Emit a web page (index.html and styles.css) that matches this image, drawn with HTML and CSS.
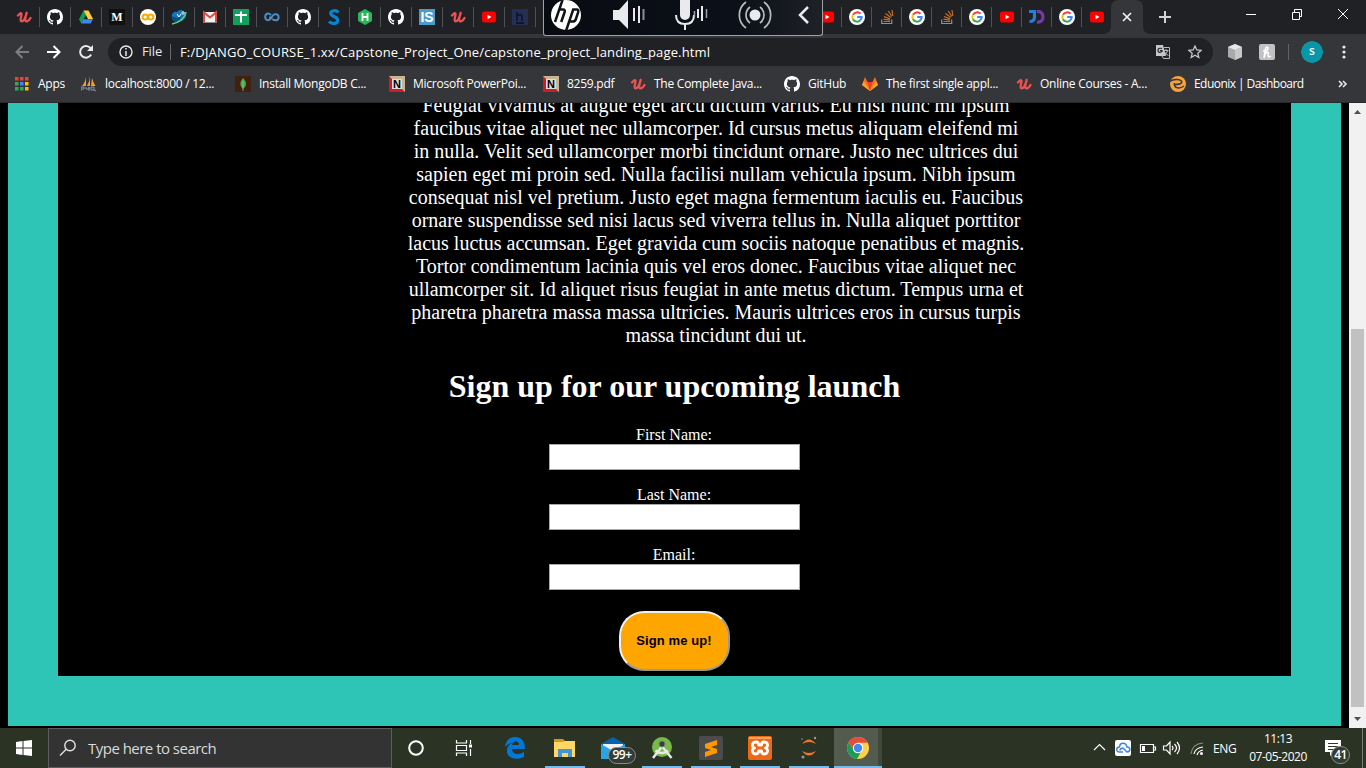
FILE: index.html
```html
<!DOCTYPE html>
<html lang="en">
<head>
<meta charset="utf-8">
<title>Capstone landing page</title>
<link rel="stylesheet" href="styles.css">
</head>
<body>
<svg class="defs" width="0" height="0">
  <symbol id="udemy" viewBox="0 0 16 16"><path d="M2 6.500Q5 3 5.500 4.800C5.800 6.500 3.300 12.200 5.600 12.400C8 12.500 10 7.500 10.600 4M10.600 4C9 9 8.600 12.500 10.500 12.400C12.300 12.300 13.300 11 14.500 9" fill="none" stroke="#ec5252" stroke-width="2.300" stroke-linecap="round"/></symbol>
  <symbol id="github" viewBox="0 0 16 16"><path fill="#fff" d="M8 0C3.580 0 0 3.580 0 8c0 3.540 2.290 6.530 5.470 7.590.4.070.55-.17.55-.38 0-.19-.01-.82-.01-1.490-2.010.37-2.530-.49-2.690-.94-.09-.23-.48-.94-.82-1.130-.28-.15-.68-.52-.01-.53.63-.01 1.080.58 1.230.82.72 1.210 1.870.87 2.330.66.070-.52.28-.87.51-1.070-1.780-.2-3.640-.89-3.640-3.950 0-.87.31-1.590.82-2.150-.08-.2-.36-1.020.08-2.120 0 0 .67-.21 2.200.82.64-.18 1.320-.27 2-.27s1.360.09 2 .27c1.530-1.040 2.200-.82 2.200-.82.44 1.100.16 1.920.08 2.120.51.56.82 1.270.82 2.150 0 3.070-1.870 3.750-3.650 3.950.29.25.54.73.54 1.480 0 1.070-.01 1.930-.01 2.200 0 .21.15.46.55.38A8.010 8.010 0 0 0 16 8c0-4.420-3.580-8-8-8z"/></symbol>
  <symbol id="drive" viewBox="0 0 16 16"><path fill="#0f9d58" d="M5.500 1.500L8 6 3.300 14.500 1 10.200z"/><path fill="#ffcd40" d="M5.500 1.500h5L15 10h-5z"/><path fill="#4285f4" d="M5.400 10.200H15l-2.500 4.300H3.200z"/></symbol>
  <symbol id="colab" viewBox="0 0 16 16"><circle cx="8" cy="8" r="8" fill="#fff"/><g fill="none" stroke="#f9ab00" stroke-width="2"><circle cx="5.200" cy="8" r="2.600"/><circle cx="10.800" cy="8" r="2.600"/></g></symbol>
  <symbol id="globe" viewBox="0 0 16 16"><path fill="#1575b5" d="M1 9C0 4 3 2 6 3c2-3 6-2 7-.5 3 1 3 5 0 8-3 3-11 4-12-1.500z"/><path fill="#08508b" d="M1 7l5 2 4-2-2 6-6-1z"/><path fill="none" stroke="#63cf68" stroke-width="1.500" d="M1 15C8 14 14 9 15 3"/><path fill="none" stroke="#fff" d="M6 5l2 3 2-3"/><circle cx="12" cy="4" r="1.200" fill="none" stroke="#fff" stroke-width=".8"/></symbol>
  <symbol id="gmail" viewBox="0 0 16 16"><path fill="#f1f1f1" d="M1 3h14v10.500H1z"/><path fill="none" stroke="#dd4b3e" stroke-width="2" d="M2 13.500V3.500l6 5 6-5v10"/></symbol>
  <symbol id="sheet" viewBox="0 0 16 16"><path fill="#12a05c" d="M0 0h16v16H0z"/><path stroke="#fff" stroke-width="2" d="M2 6h12M8 2.500v11"/></symbol>
  <symbol id="loop" viewBox="0 0 16 16"><path fill="none" stroke="#4a8ec8" stroke-width="2" d="M7 6C4 3 1 5 1.200 8c.3 4 4 4 6.200 1l1-2c2-3 6-2 6.200 1 .2 4-4 4-6.200 2M5 8.500h3"/></symbol>
  <symbol id="skill" viewBox="0 0 16 16"><path fill="none" stroke="#0785d2" stroke-width="3.200" d="M12.500 3.500C10 .8 4.800 1.200 4.700 4.300c-.1 3.500 7 3 7 7 0 4-6 4-8.700 1.200"/></symbol>
  <symbol id="hacker" viewBox="0 0 16 16"><path fill="#2ab75a" stroke="#2ab75a" stroke-linejoin="round" d="M8 .5l6.500 3.700v7.600L8 15.500l-6.500-3.700V4.200z"/><path stroke="#fff" stroke-width="1.800" d="M5.500 4v8M10.500 4v8M5.500 8h5"/></symbol>
  <symbol id="youtube" viewBox="0 0 16 16"><rect x="1" y="2.500" width="14" height="11" rx="2.500" fill="#f00"/><path fill="#fff" d="M6.500 5.700L10.500 8l-4 2.300z"/></symbol>
  <symbol id="hyp" viewBox="0 0 16 16"><path fill="#252f56" d="M0 0h16v16H0z"/><path fill="none" stroke="#11172b" stroke-width="1.800" d="M5 3v9M5 7q5-3 5 1v4M4 14h8"/></symbol>
  <symbol id="google" viewBox="0 0 16 16"><circle cx="8" cy="8" r="8" fill="#fff"/><g fill="none" stroke-width="2"><path stroke="#ea4335" d="M4 5.800A4.700 4.700 0 0 1 11.500 4.800"/><path stroke="#fbbc05" d="M4 5.700a4.700 4.700 0 0 0 0 4.700"/><path stroke="#34a853" d="M4 10.200a4.700 4.700 0 0 0 7.200 1.300"/><path stroke="#4285f4" d="M11 11.600C12.500 10.200 12.800 9 12.700 8H8.200"/></g></symbol>
  <symbol id="stack" viewBox="0 0 16 16"><path fill="none" stroke="#8c9296" stroke-width="1.200" d="M2.700 10.500v4h10v-4"/><path stroke="#c96d20" stroke-width="1.200" d="M4.500 12.500h6.500M4.500 10.200l6.500.9M5 7.500l6 2.400M6.500 4.600l5.300 4M9.300 2l3.500 5.500M13 1l.8 6"/></symbol>
  <symbol id="jd" viewBox="0 0 16 16"><path fill="none" stroke="#297bd5" stroke-width="3.200" d="M0 2.500h5.500V8q0 4.500-5 4.500"/><path fill="none" stroke="#793aa8" stroke-width="3.200" d="M8 2.500c8-1 8 12 0 10.500"/></symbol>
  <symbol id="mysql" viewBox="0 0 16 16"><path fill="#f89c24" d="M5 1v9H1q3-3 4-9zM9 0v10H6q3-5 3-10zM11 2q1 4 3.500 8H10z"/><path fill="none" stroke="#8d91a9" stroke-width="1" d="M0 15v-4h3v2H0m5-2v2h3v-2m0 0v4m2-4v3h3v-3h-3m3 3l2 1"/></symbol>
  <symbol id="mongo" viewBox="0 0 16 16"><path fill="#41210e" d="M0 0h16v16H0z"/><path fill="#47a84d" d="M8 2c4 4 4 8 0 11C4 9 5 6 8 2z"/><path stroke="#b4d6af" stroke-width=".6" d="M8 5v10"/></symbol>
  <symbol id="gitlab" viewBox="0 0 16 16"><path fill="#fc6d26" d="M0 9l3-8 2.500 5h5L13 1l3 8-8 6z"/><path fill="#e24329" d="M5.500 6h5L8 15z"/><path fill="#fca326" d="M0 9l2-4 6 10zM16 9l-2-4-6 10z"/></symbol>
  <symbol id="eduonix" viewBox="0 0 16 16"><circle cx="8" cy="8" r="8" fill="#f5a33d"/><path fill="none" stroke="#35363a" stroke-width="1.500" d="M0 5.500C3 3.500 9 2.500 11.500 5c1 2.500-2 3.500-7.500 3.500M4.300 7C4 13 10 13 14 10"/></symbol>
</svg>

<header class="browser">
  <div class="tabstrip">
    <div class="tabs">
      <div class="tab"><svg><use href="#udemy"/></svg></div>
      <div class="tab"><svg><use href="#github"/></svg></div>
      <div class="tab"><svg><use href="#drive"/></svg></div>
      <div class="tab"><svg viewBox="0 0 16 16"><path fill="#12100e" d="M0 0h16v16H0z"/><text x="8" y="12.200" text-anchor="middle" class="serif" font-size="12" fill="#fff">M</text></svg></div>
      <div class="tab"><svg><use href="#colab"/></svg></div>
      <div class="tab"><svg><use href="#globe"/></svg></div>
      <div class="tab"><svg><use href="#gmail"/></svg></div>
      <div class="tab"><svg><use href="#sheet"/></svg></div>
      <div class="tab"><svg><use href="#loop"/></svg></div>
      <div class="tab"><svg><use href="#github"/></svg></div>
      <div class="tab"><svg><use href="#skill"/></svg></div>
      <div class="tab"><svg><use href="#hacker"/></svg></div>
      <div class="tab"><svg><use href="#github"/></svg></div>
      <div class="tab"><svg viewBox="0 0 16 16"><path fill="#4d9bca" d="M0 0h16v16H0z"/><text x="8" y="13" text-anchor="middle" class="sans" font-size="14" fill="#fff">IS</text></svg></div>
      <div class="tab"><svg><use href="#udemy"/></svg></div>
      <div class="tab"><svg><use href="#youtube"/></svg></div>
      <div class="tab"><svg><use href="#hyp"/></svg></div>
    </div>
    <div class="tabs tabs-narrow">
      <div class="tab"><svg><use href="#youtube"/></svg></div>
      <div class="tab"><svg><use href="#google"/></svg></div>
      <div class="tab"><svg><use href="#stack"/></svg></div>
      <div class="tab"><svg><use href="#google"/></svg></div>
      <div class="tab"><svg><use href="#stack"/></svg></div>
      <div class="tab"><svg><use href="#google"/></svg></div>
      <div class="tab"><svg><use href="#youtube"/></svg></div>
      <div class="tab"><svg><use href="#jd"/></svg></div>
      <div class="tab"><svg><use href="#google"/></svg></div>
      <div class="tab tab-last"><svg><use href="#youtube"/></svg></div>
    </div>
    <svg class="active-tab" viewBox="0 0 48 34"><path fill="#35363a" d="M0 34q8 0 8-8V8q0-8 8-8h16q8 0 8 8v18q0 8 8 8z"/><path stroke="#f1f3f4" stroke-width="1.700" d="M20 13l8 8m0-8l-8 8"/></svg>
    <svg class="new-tab" viewBox="0 0 14 14"><path stroke="#d0d2d4" stroke-width="2" d="M1 7h12M7 1v12"/></svg>
    <svg class="window-controls" viewBox="0 0 104 12"><path d="M0 6.500h10M46.500 4.500h7v7h-7zM48.500 4.500v-3h7v7h-2M92 1l10 10m0-10L92 11" fill="none" stroke="#fff"/></svg>
  </div>

  <div class="hp-panel">
    <svg viewBox="0 0 279 36">
      <circle cx="22" cy="15" r="15" fill="#fff"/><path fill="none" stroke="#111318" stroke-width="2.500" d="M18.500 0L11 22M15.500 9.500h3.500q2.500 0 1.500 3L17.200 22M22 31l7.200-21.500h3.300q2.500 0 1.600 2.800l-2.200 6.700q-.8 2.500-3 2.500h-3"/>
      <path fill="#e8eaed" d="M69 10h6L84 0v29l-9-9h-6z"/><path stroke="#e8eaed" stroke-width="2" d="M90 8v13M95 6v17"/><path stroke="#8b8e94" stroke-width="2" d="M99.500 9v11"/>
      <rect x="136" y="-5" width="10" height="25" rx="5" fill="#e8eaed"/><path fill="none" stroke="#e8eaed" stroke-width="2" d="M132 15q0 9 9 9t9-9M141 24v6M154 9v9M158 6v15"/><path stroke="#9da0a5" stroke-width="1.500" d="M150.500 11v6M162.500 9v9"/>
      <circle cx="211" cy="15" r="5.500" fill="#e8eaed"/><g fill="none" stroke="#b9bdc4" stroke-width="1.700"><path d="M206 7a10 10 0 0 0 0 16M216 7a10 10 0 0 1 0 16M202 2a16 16 0 0 0 0 26M220 2a16 16 0 0 1 0 26"/></g>
      <path fill="none" stroke="#e8eaed" stroke-width="2.500" d="M264 7l-8 8 8 8"/>
    </svg>
  </div>

  <div class="toolbar">
    <svg class="nav" viewBox="0 0 80 16"><g fill="none" stroke-width="2"><path stroke="#7c7e82" d="M15 8H2m6.500-6L2.500 8l6 6"/><path stroke="#fff" d="M33 8h13m-6.500-6l6 6-6 6"/><path stroke="#e8eaed" d="M77 5A5.800 5.800 0 1 0 77.100 10.500"/></g><path fill="#e8eaed" d="M79 1v6h-6z"/></svg>
    <div class="omnibox">
      <svg class="info" viewBox="0 0 14 14"><circle cx="7" cy="7" r="6" fill="none" stroke="#e8eaed" stroke-width="1.400"/><path stroke="#e8eaed" stroke-width="1.500" d="M7 6v5M7 3v1.600"/></svg>
      <span class="scheme">File</span>
      <span class="url">F:/DJANGO_COURSE_1.xx/Capstone_Project_One/capstone_project_landing_page.html</span>
      <svg class="translate" viewBox="0 0 14 14"><path fill="#c3c5c8" d="M0 0h7l3 11H0z"/><path fill="none" stroke="#babcbf" d="M8 2.500h5.500v11h-6L6 11M7.500 5.500h5M10 4v2m1.500 0q-1 3-3 4m0-3q2 3 4 3.500"/><path fill="none" stroke="#202124" stroke-width="1.200" d="M6 3.500q-4-1-4 2t4 1V5.500H4"/></svg>
      <svg class="star" viewBox="0 0 14 14"><path fill="none" stroke="#c4c6c9" stroke-width="1.300" d="M7 1l1.800 4 4.300.4-3.300 2.900 1 4.200L7 10.300l-3.800 2.200 1-4.200L.9 5.400 5.200 5z"/></svg>
    </div>
    <svg class="extensions" viewBox="0 0 48 18"><path fill="#aaa" d="M0 4l7-3 7 3v10l-7 3-7-3z"/><path fill="#e8e8e8" d="M0 4l7-3 7 3-7 3z"/><path fill="#c9c9c9" d="M7 7l7-3v10l-7 3z"/><rect x="31" y="1" width="16" height="16" rx="2" fill="#c2c2c2"/><path fill="none" stroke="#fff" stroke-width="1.500" d="M35 8q5 0 5-3-2-3-3 3l-1 7q1-5 3-6 2 0 1 3 0 3 3 1"/></svg>
    <span class="avatar">s</span>
    <svg class="more" viewBox="0 0 4 14"><g fill="#e8eaed"><circle cx="2" cy="2" r="1.600"/><circle cx="2" cy="7" r="1.600"/><circle cx="2" cy="12" r="1.600"/></g></svg>
  </div>

  <nav class="bookmarks">
    <span class="bookmark"><svg viewBox="0 0 16 16"><path fill="#ea4335" d="M1 1h3.500v3.500H1zM6 1h3.500v3.500H6zM11 1h3.500v3.500H11z"/><path fill="#34a853" d="M1 6h3.500v3.500H1zM1 11h3.500v3.500H1zM6 11h3.500v3.500H6z"/><path fill="#4285f4" d="M6 6h3.500v3.500H6z"/><path fill="#fbbc05" d="M11 6h3.500v3.500H11zM11 11h3.500v3.500H11z"/></svg><span>Apps</span></span>
    <span class="bookmark"><svg><use href="#mysql"/></svg><span>localhost:8000 / 12...</span></span>
    <span class="bookmark"><svg><use href="#mongo"/></svg><span>Install MongoDB C...</span></span>
    <span class="bookmark"><svg viewBox="0 0 16 16"><path fill="#c9b494" d="M0 0h16v16H0z"/><path fill="#cf1b24" d="M0 0l16 16H0z"/><path fill="#ddd" d="M3 3h10v10H3z"/><text x="8" y="12" text-anchor="middle" class="sans" font-size="11">N</text></svg><span>Microsoft PowerPoi...</span></span>
    <span class="bookmark"><svg viewBox="0 0 16 16"><path fill="#c9b494" d="M0 0h16v16H0z"/><path fill="#cf1b24" d="M0 0l16 16H0z"/><path fill="#ddd" d="M3 3h10v10H3z"/><text x="8" y="12" text-anchor="middle" class="sans" font-size="11">N</text></svg><span>8259.pdf</span></span>
    <span class="bookmark"><svg><use href="#udemy"/></svg><span>The Complete Java...</span></span>
    <span class="bookmark"><svg><use href="#github"/></svg><span>GitHub</span></span>
    <span class="bookmark"><svg><use href="#gitlab"/></svg><span>The first single appl...</span></span>
    <span class="bookmark"><svg><use href="#udemy"/></svg><span>Online Courses - A...</span></span>
    <span class="bookmark tight"><svg><use href="#eduonix"/></svg><span>Eduonix | Dashboard</span></span>
    <svg class="overflow" viewBox="0 0 10 8"><path fill="none" stroke="#e8eaed" stroke-width="1.600" d="M1 1l3 3-3 3M5 1l3 3-3 3"/></svg>
  </nav>
</header>

<div class="viewport">
  <main class="page">
    <section class="landing">
      <p class="copy">Feugiat vivamus at augue eget arcu dictum varius. Eu nisl nunc mi ipsum<br>faucibus vitae aliquet nec ullamcorper. Id cursus metus aliquam eleifend mi<br>in nulla. Velit sed ullamcorper morbi tincidunt ornare. Justo nec ultrices dui<br>sapien eget mi proin sed. Nulla facilisi nullam vehicula ipsum. Nibh ipsum<br>consequat nisl vel pretium. Justo eget magna fermentum iaculis eu. Faucibus<br>ornare suspendisse sed nisi lacus sed viverra tellus in. Nulla aliquet porttitor<br>lacus luctus accumsan. Eget gravida cum sociis natoque penatibus et magnis.<br>Tortor condimentum lacinia quis vel eros donec. Faucibus vitae aliquet nec<br>ullamcorper sit. Id aliquet risus feugiat in ante metus dictum. Tempus urna et<br>pharetra pharetra massa massa ultricies. Mauris ultrices eros in cursus turpis<br>massa tincidunt dui ut.</p>
      <h1>Sign up for our upcoming launch</h1>
      <form class="signup">
        <label>First Name:<input type="text"></label>
        <label>Last Name:<input type="text"></label>
        <label>Email:<input type="text"></label>
        <button type="button">Sign me up!</button>
      </form>
    </section>
  </main>
  <div class="scrollbar">
    <svg viewBox="0 0 7 4"><path fill="#505050" d="M0 4l3.500-4L7 4z"/></svg>
    <div class="thumb"></div>
    <svg viewBox="0 0 7 4"><path fill="#505050" d="M0 0l3.500 4L7 0z"/></svg>
  </div>
</div>

<footer class="taskbar">
  <div class="start"><svg viewBox="0 0 16 16"><path fill="#fff" d="M0 2l6.500-1v6.500H0zM7.500.9L16 0v7.500H7.500zM0 8.500h6.500V15L0 14zM7.500 8.500H16V16l-8.500-1z"/></svg></div>
  <div class="search"><svg viewBox="0 0 18 18"><g fill="none" stroke="#e2e2e2" stroke-width="1.400"><circle cx="11" cy="6.500" r="5.200"/><path d="M7.200 10.300L1 16.500"/></g></svg><span>Type here to search</span></div>
  <div class="apps">
    <div class="app"><svg viewBox="0 0 24 24"><circle cx="12" cy="12" r="6.800" fill="none" stroke="#fff" stroke-width="2"/></svg></div>
    <div class="app"><svg viewBox="0 0 24 24"><path fill="none" stroke="#fff" stroke-width="1.200" d="M4.500 4v3h10V4M4.500 20v-3h10v3M4.500 9.500h10v5h-10zM18.500 4v4m0 5v7"/><path fill="#fff" d="M17 8.500h3v3h-3z"/></svg></div>
    <div class="app"><svg viewBox="0 0 24 24"><path fill="#0078d7" d="M2 11C3 4 7 1 12 1c7 0 10 5 10 12H9c0 6 8 6 12 3v5c-8 4-18 1-17-7 0-4 3-6 6-7-4 0-6 2-8 4zm7-2h7c0-5-6-5-7 0z"/></svg></div>
    <div class="app open"><svg viewBox="0 0 24 24"><path fill="#d99a12" d="M1 3h9l2 2h10v4H1z"/><path fill="#ffd767" d="M1 6h9l2-1h10v16H1z"/><path fill="#4496d3" d="M5 21v-8h14v8h-4v-4H9v4z"/></svg></div>
    <div class="app"><svg viewBox="0 0 24 24"><path fill="#0862af" d="M0 8l12-7 12 7v4H0z"/><path fill="#f1f1f1" d="M2 8h20v8H2z"/><path fill="#29a5e6" d="M0 8l12 7 12-7v15H0z"/></svg><span class="count">99+</span></div>
    <div class="app open"><svg viewBox="0 0 24 24"><circle cx="12" cy="11" r="10" fill="#78b94a"/><path fill="none" stroke="#e5eae7" stroke-width="2.500" d="M11.500 11L3 22m9.500-11l9 11M5.500 14.500q6.500 5 12.500 0"/><circle cx="12" cy="8" r="3" fill="#34403b" stroke="#77817c"/></svg></div>
    <div class="app open"><svg viewBox="0 0 24 24"><rect width="24" height="24" rx="2" fill="#4b4b4e"/><path fill="#ff9800" d="M6 8l12-4v5l-6 2 6 2v4L6 21v-5l6-2-6-2z"/></svg></div>
    <div class="app open"><svg viewBox="0 0 24 24"><rect width="24" height="24" rx="2" fill="#ef6814"/><path fill="#f7a45f" d="M1 1h22v2H1z"/><path fill="none" stroke="#fff" stroke-width="2.800" stroke-linejoin="round" d="M6.500 12Q4 11 4.500 8.500 5 6 8 6q2.500 0 2.500 3h3q0-3 2.500-3 3 0 3.500 2.500.5 2.500-2 3.500 2.500 1 2 3.500-.5 2.500-3.500 2.500-2.500 0-2.500-3h-3q0 3-2.500 3-3 0-3.500-2.500Q4 13 6.500 12z"/></svg></div>
    <div class="app open"><svg viewBox="0 0 24 24"><g fill="#f37626"><path d="M5 8q7-9 14 0-7-4-14 0zM5 15q7 9 14 0-7 4-14 0z"/></g><g fill="#999"><circle cx="6" cy="21" r="1.500"/><circle cx="18" cy="2" r="1.200"/><circle cx="5" cy="3" r=".8"/></g></svg></div>
    <div class="app open current"><svg viewBox="0 0 24 24"><circle cx="12" cy="12" r="11" fill="#fcd04b"/><path fill="#e64b3c" d="M2.500 6.500A11 11 0 0 1 21.600 6.800H12L8 14z"/><path fill="#1b9c59" d="M2.500 6.500A11 11 0 0 0 11 23l5-9-8 0z"/><circle cx="12" cy="12" r="5.200" fill="#fff"/><circle cx="12" cy="12" r="4.200" fill="#4587f3"/></svg></div>
  </div>
  <div class="tray">
    <svg class="tray-icons" viewBox="0 0 112 18"><g fill="none" stroke="#fff" stroke-width="1.200"><path d="M1 11l5.500-5.500L12 11"/><path d="M47.500 5.500h13v8h-13zM61 8h1.500v3H61"/><path d="M70.500 7h3L77 3v12l-3.500-4h-3zM79 7q2 2 0 4M81.500 5q4 4 0 8M84 3q5 6 0 12"/></g><path fill="#fff" d="M49 7h3v5h-3z"/><rect x="22" y="1" width="16" height="16" rx="2" fill="#fff"/><path fill="none" stroke="#3f83df" stroke-width="1.500" d="M30 13h-3.500c-4 0-3.500-5 0-5 .5-5 6.500-5 7.500 0 4 0 3.500 5 0 5l-4-4q-3 .5-3 2.500"/><g fill="none" stroke="#888f83" stroke-width="1.200"><path d="M98 15Q99 5 110 4"/><path stroke="#fff" d="M101 15q1-6 9-7M104 16q1-4 6-5"/></g><circle cx="108.500" cy="14.500" r="1.500" fill="#fff"/></svg>
    <span class="lang">ENG</span>
    <div class="clock"><span>11:13</span><span>07-05-2020</span></div>
    <div class="notice"><svg viewBox="0 0 16 16"><path fill="#fff" d="M0 0h16v12H9l-4 4v-4H0z"/><path stroke="#303629" stroke-width="1.200" d="M3 3.500h10M3 6.500h10M3 9.500h7"/></svg><span class="badge">41</span></div>
    <div class="desktop-edge"></div>
  </div>
</footer>
</body>
</html>
```
FILE: styles.css
```css
* { box-sizing: border-box; }
body { margin: 0; width: 1366px; height: 768px; overflow: hidden; background: #000; font-family: "Open Sans", "Noto Sans", sans-serif; color: #fff; }
svg { display: block; flex: none; }
.defs { position: absolute; }
.serif { font-family: "Liberation Serif", serif; font-weight: bold; letter-spacing: 0; }
.sans { font-family: "Liberation Sans", sans-serif; font-weight: bold; letter-spacing: 0; }

.browser { position: relative; height: 103px; background: #35363a; border-bottom: 1px solid #28292c; }
.tabstrip { height: 34px; display: flex; align-items: center; padding-left: 9px; background: #202124; }
.tabs { display: flex; }
.tabs-narrow { margin-left: 276px; }
.tab { width: 31px; height: 20px; display: flex; align-items: center; justify-content: center; border-right: 1px solid #505155; }
.tabs-narrow .tab { width: 30px; }
.tab svg { width: 16px; height: 16px; }
.tabs .tab-last { border-color: transparent; }
.active-tab { width: 48px; height: 34px; margin-left: -9px; }
.new-tab { width: 14px; height: 14px; margin-left: 7px; }
.window-controls { width: 104px; height: 12px; margin: -6px 0 0 74px; }

.hp-panel { position: absolute; z-index: 1; left: 543px; top: 0; width: 280px; height: 36px; background: linear-gradient(90deg, #080b12, #0c1018 70%, #1e2126); border: 1px solid #a0a2a5; border-top: 0; border-radius: 0 0 3px 3px; overflow: hidden; }
.hp-panel svg { width: 279px; height: 36px; }

.toolbar { height: 36px; display: flex; align-items: center; padding-left: 14px; }
.nav { width: 80px; height: 16px; }
.omnibox { width: 1105px; height: 28px; margin-left: 14px; border-radius: 14px; background: #202124; display: flex; align-items: center; padding-left: 11px; font-size: 13px; }
.info { width: 14px; height: 14px; }
.scheme { width: 29px; height: 16px; flex: none; line-height: 15px; margin-left: 9px; border-right: 1px solid #66686c; color: #e8eaed; letter-spacing: -.1px; }
.url { width: 975px; flex: none; margin-left: 9px; white-space: nowrap; letter-spacing: .16px; line-height: 18px; margin-top: -1px; }
.translate { width: 14px; height: 14px; margin-left: 1px; }
.star { width: 14px; height: 14px; margin-left: 18px; }
.extensions { width: 48px; height: 18px; margin-left: 15px; }
.avatar { width: 48px; height: 22px; margin-left: 12px; font-size: 12px; font-weight: 600; line-height: 20px; text-align: center; background: radial-gradient(circle at 24px 11px, #0797a7 10.500px, transparent 11px), linear-gradient(#606267, #606267) 0 3px / 1px 16px no-repeat; }
.more { width: 4px; height: 14px; margin-left: 6px; }

.bookmarks { height: 28px; display: grid; grid-template-columns: 67px 154px 154px 154px 87px 154px 78px 154px 154px 168px 10px; align-items: center; padding-left: 14px; font-size: 12px; }
.bookmark { display: flex; align-items: center; gap: 8px; white-space: nowrap; letter-spacing: -.25px; line-height: 16px; }
.bookmark.tight { letter-spacing: -.55px; }
.bookmark svg { width: 16px; height: 16px; }
.overflow { width: 10px; height: 8px; }

.viewport { height: 625px; display: flex; justify-content: space-between; overflow: hidden; }
.page { width: 1333px; height: 623px; margin-left: 8px; background: #2ec4b6; padding: 0 50px 50px; }
.landing { height: 573px; background: #000; overflow: hidden; font-family: "Liberation Serif", "Times New Roman", serif; text-align: center; }
.copy { width: 640px; margin: -9px 0 0 338px; font-size: 20px; line-height: 23px; white-space: nowrap; }
.landing h1 { width: 1233px; margin: 21px 0 21px; font-size: 32px; line-height: 37px; }
.signup { width: 1232px; display: flex; flex-direction: column; align-items: center; }
.signup label { display: flex; flex-direction: column; align-items: center; height: 60px; font-size: 16px; line-height: 18px; }
.signup input { width: 251px; height: 26px; margin: 0; padding: 0; background: #fff; border: 1px solid #a9a9a9; }
.signup button { width: 111px; height: 60px; margin: 5px 0 0; padding: 0 0 2px; border: 2px solid; border-color: #efefef #999 #999 #efefef; border-radius: 25px; background: #ffa500; color: #000; font: bold 13px "Liberation Sans", sans-serif; letter-spacing: .1px; }
.scrollbar { width: 17px; height: 625px; background: #f1f1f1; display: flex; flex-direction: column; align-items: center; padding: 7px 0 0; }
.scrollbar svg { width: 7px; height: 4px; }
.thumb { width: 13px; height: 378px; margin: 215px 0 10px; background: #c1c1c1; flex: none; }

.taskbar { height: 40px; display: flex; background: #2b3325; }
.start { width: 48px; display: grid; place-items: center; }
.start svg { width: 16px; height: 16px; }
.search { width: 344px; display: flex; align-items: center; gap: 11px; padding-left: 10px; background: #333; border: 1px solid #5d5d5d; color: #dadada; font-size: 15px; letter-spacing: -.52px; }
.search svg { width: 18px; height: 18px; }
.apps { display: flex; }
.app { position: relative; width: 49px; height: 40px; display: flex; align-items: center; justify-content: center; }
.app:first-child { width: 48px; }
.app:nth-child(2) { width: 48px; }
.app:nth-child(3) { width: 54px; }
.app:nth-child(4) { width: 46px; }
.app svg { width: 24px; height: 24px; }
.app.open { background: linear-gradient(#76b9ed, #76b9ed) center bottom / 40px 2px no-repeat; }
.app.current { width: 48px; margin-left: 1px; background: linear-gradient(#76b9ed, #76b9ed) center bottom / 48px 2px no-repeat, linear-gradient(90deg, #535a4e 44px, #41483b 44px); }
.count { position: absolute; left: 20px; top: 19px; width: 28px; height: 17px; border: 1px solid #888d87; border-radius: 9px; background: #343b38; font-size: 12px; font-weight: 600; line-height: 14px; text-align: center; letter-spacing: -.5px; }
.tray { margin-left: auto; display: flex; align-items: center; }
.tray-icons { width: 112px; height: 18px; }
.lang { width: 28px; margin-left: 8px; font-size: 12px; letter-spacing: -.4px; }
.clock { width: 74px; display: flex; flex-direction: column; align-items: center; font-size: 12px; line-height: 18px; letter-spacing: -.5px; }
.notice { position: relative; width: 37px; margin-left: 10px; }
.notice svg { width: 16px; height: 16px; }
.badge { position: absolute; left: 6px; top: 6px; width: 19px; height: 18px; border: 1px solid #888d87; border-radius: 9px; background: #343a34; font-size: 12px; font-weight: 600; line-height: 15px; text-align: center; letter-spacing: -.5px; }
.desktop-edge { width: 4px; height: 40px; border-left: 1px solid #7a8076; }
```
